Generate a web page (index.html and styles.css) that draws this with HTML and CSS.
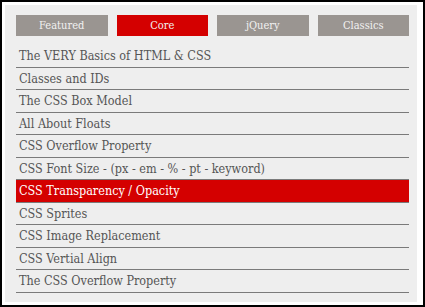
FILE: index.html
```html
<!DOCTYPE html>
<html>
<head>
<meta charset="utf-8">
<link rel="stylesheet" href="styles.css">
</head>
<body>
<div class="frame">
  <div class="panel">
    <div class="tabs">
      <div class="tab">Featured</div>
      <div class="tab active">Core</div>
      <div class="tab">jQuery</div>
      <div class="tab">Classics</div>
    </div>
    <ul class="list">
      <li>The VERY Basics of HTML &amp; CSS</li>
      <li>Classes and IDs</li>
      <li>The CSS Box Model</li>
      <li>All About Floats</li>
      <li>CSS Overflow Property</li>
      <li>CSS Font Size - (px - em - % - pt - keyword)</li>
      <li class="current">CSS Transparency / Opacity</li>
      <li>CSS Sprites</li>
      <li>CSS Image Replacement</li>
      <li>CSS Vertial Align</li>
      <li>The CSS Overflow Property</li>
    </ul>
  </div>
</div>
</body>
</html>
```

FILE: styles.css
```css
html, body {
  margin: 0;
  padding: 0;
  background: #fff;
}
.frame {
  box-sizing: border-box;
  width: 425px;
  height: 307px;
  border: 2px solid #000;
  background: #fff;
  padding: 3px 6px 3px 3px;
}
.panel {
  box-sizing: border-box;
  height: 100%;
  background: #eeeeee;
  padding: 10px 8px 0 11px;
}
.tabs {
  display: flex;
  gap: 9px;
}
.tab {
  flex: 1;
  height: 21px;
  line-height: 21px;
  text-align: center;
  background: #9a9591;
  color: #f2f2f2;
  font-family: "DejaVu Serif Condensed", "DejaVu Serif", serif;
  font-size: 11px;
  font-weight: normal;
}
.tab.active {
  background: #d40000;
}
.list {
  list-style: none;
  margin: 9px 0 0 0;
  padding: 0;
}
.list li {
  height: 21.5px;
  line-height: 22px;
  border-bottom: 1px solid #7a7a7a;
  padding-left: 3px;
  color: #555;
  font-family: "DejaVu Serif Condensed", "DejaVu Serif", serif;
  font-size: 12.5px;
  white-space: nowrap;
  overflow: hidden;
}
.list li.current {
  background: #d40000;
  color: #fff;
}
```
